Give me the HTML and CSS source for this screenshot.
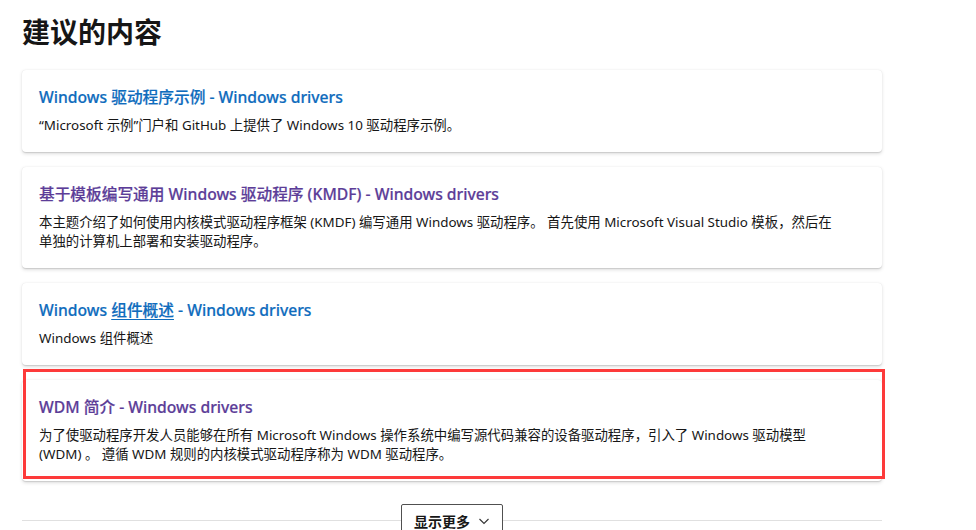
FILE: index.html
```html
<!DOCTYPE html>
<html lang="zh-CN">
<head>
<meta charset="utf-8">
<title>建议的内容</title>
<link rel="stylesheet" href="styles.css">
</head>
<body>
<main class="page">
  <h2 class="heading">建议的内容</h2>
  <div class="cards">
    <article class="card">
      <a class="card-title" href="#">Windows 驱动程序示例 - Windows drivers</a>
      <p class="card-desc">“Microsoft 示例”门户和 GitHub 上提供了 Windows 10 驱动程序示例。</p>
    </article>
    <article class="card">
      <a class="card-title visited" href="#">基于模板编写通用 Windows 驱动程序 (KMDF) - Windows drivers</a>
      <p class="card-desc">本主题介绍了如何使用内核模式驱动程序框架 (KMDF) 编写通用 Windows 驱动程序。 首先使用 Microsoft Visual Studio 模板，然后在<br>单独的计算机上部署和安装驱动程序。</p>
    </article>
    <article class="card">
      <a class="card-title" href="#">Windows <span class="hover">组件概述</span> - Windows drivers</a>
      <p class="card-desc">Windows 组件概述</p>
    </article>
    <article class="card highlighted">
      <a class="card-title visited" href="#">WDM 简介 - Windows drivers</a>
      <p class="card-desc">为了使驱动程序开发人员能够在所有 Microsoft Windows 操作系统中编写源代码兼容的设备驱动程序，引入了 Windows 驱动模型<br>(WDM) 。 遵循 WDM 规则的内核模式驱动程序称为 WDM 驱动程序。</p>
    </article>
  </div>
  <div class="more">
    <button class="more-btn" type="button">显示更多
      <svg class="chev" width="12" height="12" viewBox="0 0 12 12" aria-hidden="true"><path d="M1.5 4 L6 8.5 L10.5 4" fill="none" stroke="#333" stroke-width="1.1"/></svg>
    </button>
  </div>
</main>
</body>
</html>
```
FILE: styles.css
```css
* { box-sizing: border-box; }
html, body { margin: 0; padding: 0; background: #fff; }
body {
  font-family: "Segoe UI", "Noto Sans", "Noto Sans CJK SC", sans-serif;
  color: #161616;
  overflow: hidden;
  text-spacing-trim: space-all;
}
.page {
  width: 882px;
  padding: 11px 0 0 22px;
}
.heading {
  margin: 0;
  font-size: 28px;
  line-height: 40px;
  font-weight: 700;
  font-family: "Noto Sans CJK SC", sans-serif;
  color: #161616;
}
.cards {
  display: flex;
  flex-direction: column;
  gap: 15px;
  margin-top: 19px;
}
.card {
  position: relative;
  background: #fff;
  border-radius: 4px;
  padding: 16px 16px 17px 17px;
  box-shadow: 0 1.6px 3.6px rgba(0,0,0,0.13), 0 0.3px 0.9px rgba(0,0,0,0.11);
  display: flex;
  flex-direction: column;
  gap: 8px;
}
.card-title {
  font-size: 15.7px;
  line-height: 22px;
  font-weight: 500;
  color: #0f6cbd;
  text-decoration: none;
  -webkit-text-stroke: 0.2px currentColor;
}
.card-title.visited { color: #5c3d98; }
.card-title .hover { text-decoration: underline; text-underline-offset: 3px; }
.card-desc {
  margin: 0;
  font-size: 13.4px;
  line-height: 19px;
  color: #161616;
}
.highlighted::after {
  content: "";
  position: absolute;
  top: -11px;
  left: 1px;
  right: -3px;
  bottom: 2px;
  border: 3px solid #fd3a3a;
  pointer-events: none;
}
.more {
  position: relative;
  display: flex;
  justify-content: center;
  margin-top: 23px;
}
.more::before {
  content: "";
  position: absolute;
  left: 0;
  right: 0;
  top: 16px;
  border-top: 1px solid #e0e0e0;
}
.more-btn {
  position: relative;
  display: flex;
  align-items: center;
  gap: 8px;
  height: 34px;
  padding: 0 12px;
  background: #fff;
  border: 1px solid #505050;
  border-radius: 2px;
  font-family: "Noto Sans CJK SC", sans-serif;
  font-size: 14px;
  font-weight: 700;
  color: #161616;
}
.chev { display: block; }
```
